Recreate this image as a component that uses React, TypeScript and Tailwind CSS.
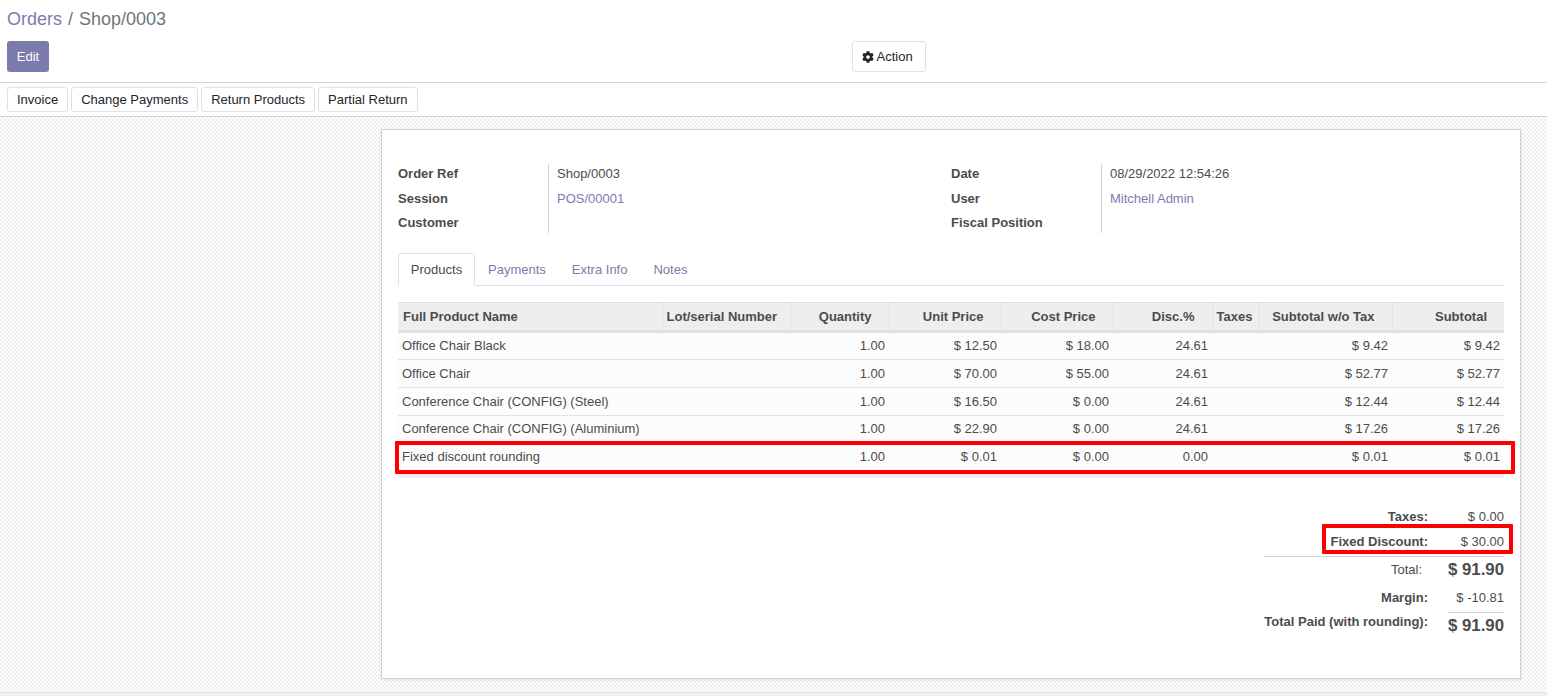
import { FaCog } from "react-icons/fa"

const rows = [
  ["Office Chair Black", "1.00", "$ 12.50", "$ 18.00", "24.61", "$ 9.42", "$ 9.42"],
  ["Office Chair", "1.00", "$ 70.00", "$ 55.00", "24.61", "$ 52.77", "$ 52.77"],
  ["Conference Chair (CONFIG) (Steel)", "1.00", "$ 16.50", "$ 0.00", "24.61", "$ 12.44", "$ 12.44"],
  ["Conference Chair (CONFIG) (Aluminium)", "1.00", "$ 22.90", "$ 0.00", "24.61", "$ 17.26", "$ 17.26"],
  ["Fixed discount rounding", "1.00", "$ 0.01", "$ 0.00", "0.00", "$ 0.01", "$ 0.01"],
]

const rowHeights = ["h-[28px]", "h-[28px]", "h-[28px]", "h-[27px]", "h-[28px]"]
const fieldHeights = ["h-[25px]", "h-[25px]", "h-[24px]"]

function Th({ children, width, left }: { children?: React.ReactNode; width: string; left?: boolean }) {
  return (
    <th
      className={`${width} ${left ? "text-left pl-1 first:pl-[5px]" : "text-right pr-[17px]"} border-r border-[#dee2e6] last:border-r-0 font-bold whitespace-nowrap`}
    >
      {children}
    </th>
  )
}

function Td({ children }: { children?: React.ReactNode }) {
  return <td className="text-right pr-1 whitespace-nowrap">{children}</td>
}

function Field({ label, value, link, height }: { label: string; value?: string; link?: boolean; height: string }) {
  return (
    <div className={`flex ${height} items-center`}>
      <span className="w-[150px] font-bold text-[#4c4c4c]">{label}</span>
      <span className={`pl-[9px] ${link ? "text-[#7c7bad]" : "text-[#4c4c4c]"}`}>{value}</span>
    </div>
  )
}

export default function App() {
  return (
    <div className="h-[696px] overflow-hidden bg-white font-['Liberation_Sans',Arial,sans-serif] text-[13px] text-[#4c4c4c] flex flex-col">
      <div className="h-[83px] shrink-0 border-b border-[#ced4da] px-[7px]">
        <div className="h-[41px] pt-[6px] text-[18px] leading-[27px] text-[#7c7bad]">
          Orders <span className="text-[#6c757d] px-[1px]">/</span> <span className="text-[#6c757d]">Shop/0003</span>
        </div>
        <div className="flex">
          <button className="w-[42px] h-[31px] rounded-[3px] bg-[#7c7bad] text-white">Edit</button>
          <div className="flex-1 flex justify-center pl-[188px]">
            <button className="w-[74px] h-[31px] pl-[9px] rounded-[3px] border border-[#dee2e6] text-[#212529] flex items-center gap-[3px]">
              <FaCog size={12} className="text-[#212529]" />
              Action
            </button>
          </div>
        </div>
      </div>

      <div className="h-[34px] shrink-0 border-b border-[#ced4da] px-[7px] flex items-center gap-[3px]">
        {["Invoice", "Change Payments", "Return Products", "Partial Return"].map((label) => (
          <button key={label} className="h-[25px] px-[9px] rounded-[3px] border border-[#dee2e6] text-[#212529] whitespace-nowrap">
            {label}
          </button>
        ))}
      </div>

      <div className="flex-1 min-h-0 bg-[repeating-conic-gradient(#eeeeee_0%_25%,#ffffff_0%_50%)] bg-[length:4px_4px] pt-[12px] pl-[381px]">
        <div className="relative w-[1140px] h-[550px] bg-white border border-[#ced4da] shadow-[0_1px_3px_rgba(0,0,0,0.1)] px-4 pt-[31px]">
          <div className="grid grid-cols-[553px_1fr]">
            {[
              [["Order Ref", "Shop/0003"], ["Session", "POS/00001", true], ["Customer", ""]],
              [["Date", "08/29/2022 12:54:26"], ["User", "Mitchell Admin", true], ["Fiscal Position", ""]],
            ].map((col, i) => (
              <div key={i} className="relative">
                <div className="absolute left-[150px] top-[3px] bottom-[2px] w-px bg-[#ced4da]" />
                {col.map((f, j) => (
                  <Field key={f[0] as string} label={f[0] as string} value={f[1] as string} link={!!f[2]} height={fieldHeights[j]} />
                ))}
              </div>
            ))}
          </div>

          <div className="mt-[18px] h-[33px] border-b border-[#dee2e6] flex items-end text-[#7c7bad]">
            <div className="h-[33px] w-[77px] mb-[-1px] border border-[#dee2e6] border-b-white rounded-t-[3px] bg-white text-[#4c4c4c] flex items-center justify-center">
              Products
            </div>
            <div className="h-[32px] pt-[1px] flex items-center px-[13px]">Payments</div>
            <div className="h-[32px] pt-[1px] flex items-center px-[13px]">Extra Info</div>
            <div className="h-[32px] pt-[1px] flex items-center pl-[13px]">Notes</div>
          </div>

          <table className="mt-[16px] w-[1106px] table-fixed border-collapse">
            <thead>
              <tr className="h-[29px] bg-[#eeeeee] border-t border-[#dee2e6] border-b-[3px] border-b-[#dee2e6] text-[#4c4c4c]">
                <Th width="w-[264px]" left>Full Product Name</Th>
                <Th width="w-[128px]" left>Lot/serial Number</Th>
                <Th width="w-[99px]">Quantity</Th>
                <Th width="w-[112px]">Unit Price</Th>
                <Th width="w-[112px]">Cost Price</Th>
                <Th width="w-[99px]">Disc.%</Th>
                <Th width="w-[47px]" left>Taxes</Th>
                <Th width="w-[133px]">Subtotal w/o Tax</Th>
                <Th width="w-[112px]">Subtotal</Th>
              </tr>
            </thead>
            <tbody>
              {rows.map((r, i) => (
                <tr key={r[0]} className={`${rowHeights[i]} bg-[#fcfcfc] border-b border-[#dee2e6] last:border-b-0`}>
                  <td colSpan={2} className="pl-1 whitespace-nowrap">{r[0]}</td>
                  <Td>{r[1]}</Td>
                  <Td>{r[2]}</Td>
                  <Td>{r[3]}</Td>
                  <Td>{r[4]}</Td>
                  <Td />
                  <Td>{r[5]}</Td>
                  <Td>{r[6]}</Td>
                </tr>
              ))}
              <tr className="h-[7px] bg-[#eeeeee]"><td colSpan={9} /></tr>
            </tbody>
          </table>

          <div className="absolute left-[13px] top-[311px] w-[1120px] h-[33px] border-[4px] border-[#ff0000] rounded-[1px]" />

          <div className="mt-[27px] ml-auto w-[240px] text-right">
            <div className="flex h-[25px] items-center justify-end">
              <span className="font-bold">Taxes:</span>
              <span className="w-[76px]">$ 0.00</span>
            </div>
            <div className="flex h-[27px] pt-[2px] items-start justify-end border-b border-[#ced4da]">
              <span className="font-bold">Fixed Discount:</span>
              <span className="w-[76px]">$ 30.00</span>
            </div>
            <div className="flex h-[27px] items-center justify-end">
              <span className="pr-[6px]">Total:</span>
              <span className="w-[76px] font-bold text-[16.8px]">$ 91.90</span>
            </div>
            <div className="flex h-[28px] items-center justify-end">
              <span className="font-bold">Margin:</span>
              <span className="w-[76px]">$ -10.81</span>
            </div>
            <div className="flex justify-end whitespace-nowrap">
              <span className="font-bold">Total Paid (with rounding):</span>
              <span className="w-[76px]">
                <span className="block ml-[20px] border-t border-[#ced4da] font-bold text-[16.8px] leading-[24px] pt-[1px]">$ 91.90</span>
              </span>
            </div>
          </div>

          <div className="absolute left-[940px] top-[394px] w-[191px] h-[30px] border-[4px] border-[#ff0000] rounded-[1px]" />
        </div>
      </div>
      <div className="h-[4px] shrink-0 bg-[#f0f0f0] border-t border-[#e4e4e4]" />
    </div>
  )
}
